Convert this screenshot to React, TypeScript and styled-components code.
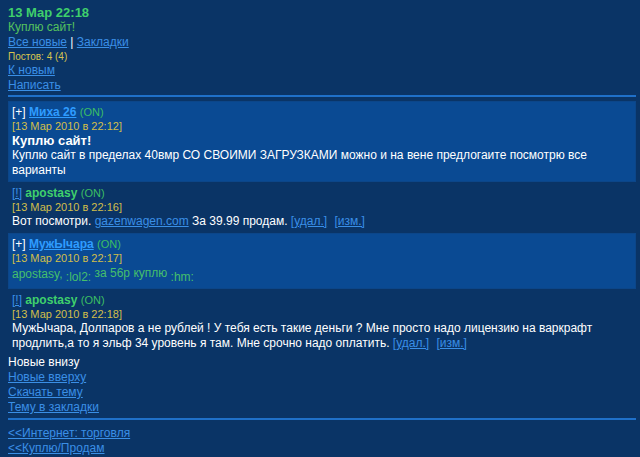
import React from "react";
import styled, { createGlobalStyle } from "styled-components";

const Global = createGlobalStyle`
  html, body { background: #0a3466; }
  body {
    margin: 5px 4px 0 8px;
    font-family: "Liberation Sans", Arial, sans-serif;
    font-size: 12px;
    line-height: 15px;
    color: #ffffff;
  }
`;

const Page = styled.div`
  display: flex;
  flex-direction: column;
`;

const Line = styled.div`
  line-height: 15px;
`;

const Clock = styled.div`
  font-weight: bold;
  font-size: 13px;
  color: #3fd06c;
  line-height: 15px;
`;

const Title = styled.div`
  color: #55c25e;
`;

const A = styled.a`
  color: #3a8fe6;
  text-decoration: underline;
  cursor: pointer;
`;

const Small = styled.div`
  font-size: 10px;
  line-height: 13px;
  color: #d7c44e;
`;

const Rule = styled.div<{ $top: number; $bottom: number }>`
  height: 2px;
  background: #1f70c9;
  margin: ${(p) => `${p.$top}px 0 ${p.$bottom}px`};
`;

const Post = styled.div<{ $boxed?: boolean }>`
  padding: 4px;
  background: ${(p) => (p.$boxed ? "#0a4a93" : "transparent")};
  box-shadow: ${(p) => (p.$boxed ? "inset 0 0 0 1px #0c4689" : "none")};
`;

const Head = styled.div`
  line-height: 15px;
  color: #ffffff;
`;

const Nick = styled.a`
  font-weight: bold;
  color: #2f9cff;
  text-decoration: underline;
`;

const GreenNick = styled.span`
  font-weight: bold;
  color: #3fd06c;
`;

const On = styled.span`
  font-size: 11px;
  color: #3cbf63;
`;

const Date = styled.div`
  font-size: 11px;
  line-height: 13px;
  color: #d2bf4a;
`;

const PostTitle = styled.div`
  font-weight: bold;
  font-size: 13px;
  line-height: 15px;
`;

const Body = styled.div`
  line-height: 15px;
  color: #ffffff;
`;

const Smile = styled.span`
  vertical-align: -3px;
`;

const Raised = styled.span`
  vertical-align: 1px;
`;

const Bang = styled.a`
  color: #3a8fe6;
  text-decoration: underline;
`;

const SmallLink = styled.a<{ $gap?: boolean }>`
  color: #3a8fe6;
  text-decoration: underline;
  margin-left: ${(p) => (p.$gap ? "4px" : "0")};
`;

const Smileys = styled.div`
  line-height: 16px;
  color: #45bf6c;
`;

export default function App() {
  return (
    <Page>
      <Global />
      <Clock>13 Мар 22:18</Clock>
      <Title>Куплю сайт!</Title>
      <Line>
        <A>Все новые</A> | <A>Закладки</A>
      </Line>
      <Small>Постов: 4 (4)</Small>
      <Line>
        <A>К новым</A>
      </Line>
      <Line>
        <A>Написать</A>
      </Line>
      <Rule $top={2} $bottom={4} />

      <Post $boxed>
        <Head>
          [+] <Nick>Миха 26</Nick> <On>(ON)</On>
        </Head>
        <Date>[13 Мар 2010 в 22:12]</Date>
        <PostTitle>Куплю сайт!</PostTitle>
        <Body>
          Куплю сайт в пределах 40вмр СО СВОИМИ ЗАГРУЗКАМИ можно и на вене предлогаите посмотрю все
          варианты
        </Body>
      </Post>

      <Post>
        <Head>
          <Bang>[!]</Bang> <GreenNick>apostasy</GreenNick> <On>(ON)</On>
        </Head>
        <Date>[13 Мар 2010 в 22:16]</Date>
        <Body>
          Вот посмотри. <SmallLink>gazenwagen.com</SmallLink> За 39.99 продам.{" "}
          <SmallLink>[удал.]</SmallLink> <SmallLink $gap>[изм.]</SmallLink>
        </Body>
      </Post>

      <Post $boxed>
        <Head>
          [+] <Nick>МужЫчара</Nick> <On>(ON)</On>
        </Head>
        <Date>[13 Мар 2010 в 22:17]</Date>
        <Smileys>
          apostasy, <Smile>:lol2:</Smile> <Raised>за 56р куплю</Raised> <Smile>:hm:</Smile>
        </Smileys>
      </Post>

      <Post>
        <Head>
          <Bang>[!]</Bang> <GreenNick>apostasy</GreenNick> <On>(ON)</On>
        </Head>
        <Date>[13 Мар 2010 в 22:18]</Date>
        <Body>
          МужЫчара, Долпаров а не рублей ! У тебя есть такие деньги ? Мне просто надо лицензию на варкрафт
          продлить,а то я эльф 34 уровень я там. Мне срочно надо оплатить.{" "}
          <SmallLink>[удал.]</SmallLink> <SmallLink $gap>[изм.]</SmallLink>
        </Body>
      </Post>

      <Line>Новые внизу</Line>
      <Line>
        <A>Новые вверху</A>
      </Line>
      <Line>
        <A>Скачать тему</A>
      </Line>
      <Line>
        <A>Тему в закладки</A>
      </Line>
      <Rule $top={3} $bottom={6} />
      <Line>
        <A>&lt;&lt;Интернет: торговля</A>
      </Line>
      <Line>
        <A>&lt;&lt;Куплю/Продам</A>
      </Line>
    </Page>
  );
}
